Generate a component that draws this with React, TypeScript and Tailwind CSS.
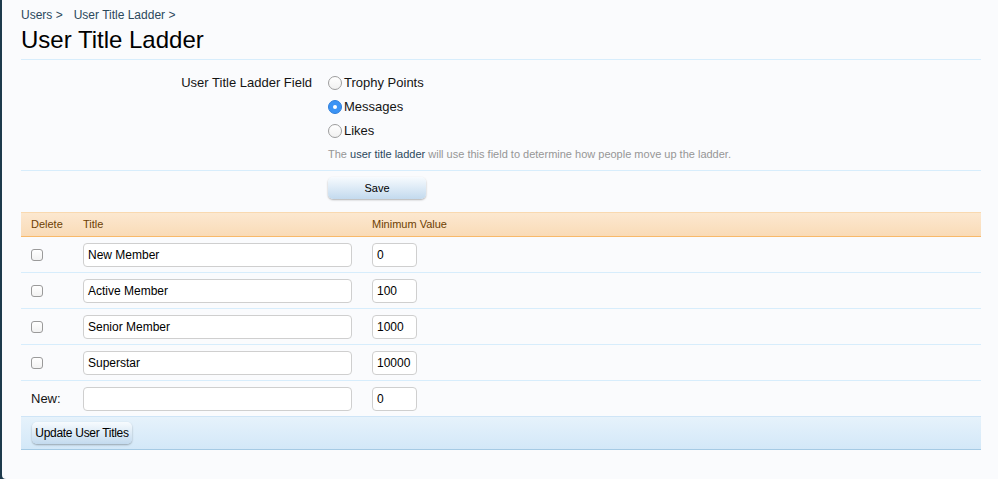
import React from "react";

const font = { fontFamily: '"Liberation Sans", Arial, sans-serif' };

function Radio({ checked }: { checked?: boolean }) {
  return checked ? (
    <span className="w-[14px] h-[14px] rounded-full bg-[#3b93f5] border border-[#2f7fdb] flex items-center justify-center shrink-0">
      <span className="w-[4px] h-[4px] rounded-full bg-white" />
    </span>
  ) : (
    <span className="w-[14px] h-[14px] rounded-full bg-gradient-to-b from-white to-[#f1f1f1] border border-[#9d9d9d] shrink-0" />
  );
}

function Check() {
  return <span className="block w-[12px] h-[12px] rounded-[3px] border border-[#9a9a9a] bg-gradient-to-b from-white to-[#f2f2f2]" />;
}

const rows = [
  { t: "New Member", v: "0" },
  { t: "Active Member", v: "100" },
  { t: "Senior Member", v: "1000" },
  { t: "Superstar", v: "10000" },
];

function TextBox({ value, w }: { value: string; w: string }) {
  return (
    <div className={`${w} h-[24px] bg-white border border-[#cfcfcf] rounded-[4px] flex items-center px-[4px] text-[12px] text-black`}>
      {value}
    </div>
  );
}

export default function App() {
  return (
    <div className="w-[998px] h-[479px] bg-[#1d3a4c] overflow-hidden" style={font}>
      <div className="ml-[2px] h-[479px] bg-[#fafbfd] rounded-bl-[4px] pl-[19px] pr-[17px] pt-[8px]">
        <div className="text-[12px] leading-[14px] text-[#2b485c] flex gap-[11px]">
          <span>Users &gt;</span>
          <span>User Title Ladder &gt;</span>
        </div>
        <h1 className="text-[24px] leading-[30px] text-black mt-[3px] mb-[4px]">User Title Ladder</h1>
        <div className="h-px bg-[#d7edfc]" />

        <div className="flex pt-[11px] pb-[8px]">
          <div className="w-[291px] text-right text-[13px] leading-[24px] text-[#141414]">User Title Ladder Field</div>
          <div className="ml-[16px] flex flex-col">
            {["Trophy Points", "Messages", "Likes"].map((l, i) => (
              <div key={l} className="flex items-center h-[24px] gap-[2px] text-[13px] text-[#141414]">
                <Radio checked={i === 1} />
                <span>{l}</span>
              </div>
            ))}
            <div className="text-[11px] leading-[16px] mt-[3px] text-[#969696]">
              The <span className="text-[#2b485c]">user title ladder</span> will use this field to determine how people move up the ladder.
            </div>
          </div>
        </div>
        <div className="h-px bg-[#d7edfc]" />
        <div className="pl-[307px] pt-[6px]">
          <div className="w-[98px] h-[22px] rounded-[5px] bg-gradient-to-b from-[#f7fbfe] to-[#c3daee] shadow-[0_1px_2px_rgba(0,0,0,0.3)] flex items-center justify-center text-[11px] text-black">
            Save
          </div>
        </div>

        <div className="mt-[13px]">
          <div className="h-[25px] flex items-center bg-gradient-to-b from-[#fce8d0] to-[#f9dbb7] border-t border-[#f9d9b0] border-b border-b-[#f8b96a] text-[11px] text-[#6d3f03]">
            <div className="w-[62px] pl-[10px]">Delete</div>
            <div className="w-[289px]">Title</div>
            <div>Minimum Value</div>
          </div>
          {rows.map((r) => (
            <div key={r.t} className="h-[36px] flex items-center border-b border-[#d7edfc]">
              <div className="w-[62px] pl-[10px]"><Check /></div>
              <div className="w-[289px]"><TextBox value={r.t} w="w-[269px]" /></div>
              <TextBox value={r.v} w="w-[45px]" />
            </div>
          ))}
          <div className="h-[35px] flex items-center">
            <div className="w-[62px] pl-[10px] text-[13px] text-[#141414]">New:</div>
            <div className="w-[289px]"><TextBox value="" w="w-[269px]" /></div>
            <TextBox value="0" w="w-[45px]" />
          </div>
          <div className="h-[34px] flex items-center pl-[11px] bg-gradient-to-b from-[#e6f2fb] to-[#d3e8f8] border-t border-[#cfe5f7] border-b border-b-[#a5cae4]">
            <div className="w-[100px] h-[22px] rounded-[5px] bg-gradient-to-b from-[#f7fbfe] to-[#c3daee] shadow-[0_1px_2px_rgba(0,0,0,0.3)] flex items-center justify-center whitespace-nowrap text-[12px] tracking-[-0.3px] text-black">
              Update User Titles
            </div>
          </div>
        </div>
      </div>
    </div>
  );
}
